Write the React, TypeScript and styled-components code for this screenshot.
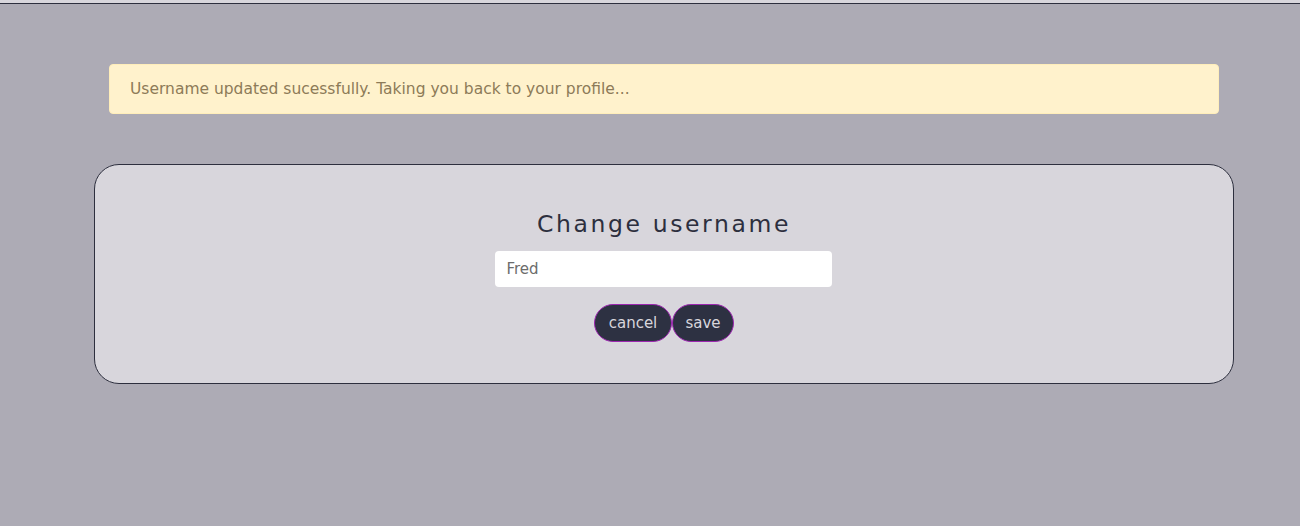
import styled, { createGlobalStyle } from "styled-components";

const GlobalStyle = createGlobalStyle`
  html, body {
    margin: 0;
    padding: 0;
    background-color: #adabb5;
    font-family: "DejaVu Sans", "Open Sans", sans-serif;
  }
`;

const Page = styled.div`
  min-height: 526px;
  background-color: #adabb5;
`;

const TopStrip = styled.div`
  height: 3px;
  background-color: #d8d6dc;
  border-bottom: 1px solid #2d2f3e;
`;

const Container = styled.div`
  width: 1140px;
  margin-left: 94px;
  padding-top: 60px;
`;

const Alert = styled.div`
  margin: 0 15px;
  padding: 12px 20px;
  line-height: 24px;
  font-size: 15.5px;
  color: #8d7b58;
  background-color: #fff2cc;
  border: 1px solid #ffeeba;
  border-radius: 4px;
`;

const Card = styled.div`
  margin-top: 50px;
  box-sizing: border-box;
  height: 220px;
  padding-top: 45px;
  display: flex;
  flex-direction: column;
  align-items: center;
  background-color: #d8d6dc;
  border: 1px solid #2d2f3e;
  border-radius: 25px;
`;

const Title = styled.h2`
  margin: 0;
  font-size: 23.5px;
  font-weight: 400;
  line-height: 29px;
  letter-spacing: 2.6px;
  color: #2d2f3e;
`;

const Input = styled.input`
  margin-top: 12px;
  margin-right: 2px;
  box-sizing: border-box;
  width: 337px;
  height: 36px;
  padding: 0 12px;
  font-family: inherit;
  font-size: 15px;
  color: #6c6c6c;
  background: #fff;
  border: none;
  border-radius: 4px;
  outline: none;
`;

const Actions = styled.div`
  margin-top: 17px;
  display: flex;
`;

const Button = styled.button<{ $w: number }>`
  box-sizing: border-box;
  width: ${(p) => p.$w}px;
  height: 38px;
  padding: 0;
  font-family: inherit;
  font-size: 15px;
  color: #d8d6dc;
  background-color: #2d3142;
  border: 1px solid #9c27b0;
  border-radius: 19px;
  cursor: pointer;
`;

export default function App() {
  return (
    <Page>
      <GlobalStyle />
      <TopStrip />
      <Container>
        <Alert>Username updated sucessfully. Taking you back to your profile...</Alert>
        <Card>
          <Title>Change username</Title>
          <Input defaultValue="Fred" />
          <Actions>
            <Button $w={78}>cancel</Button>
            <Button $w={62}>save</Button>
          </Actions>
        </Card>
      </Container>
    </Page>
  );
}
